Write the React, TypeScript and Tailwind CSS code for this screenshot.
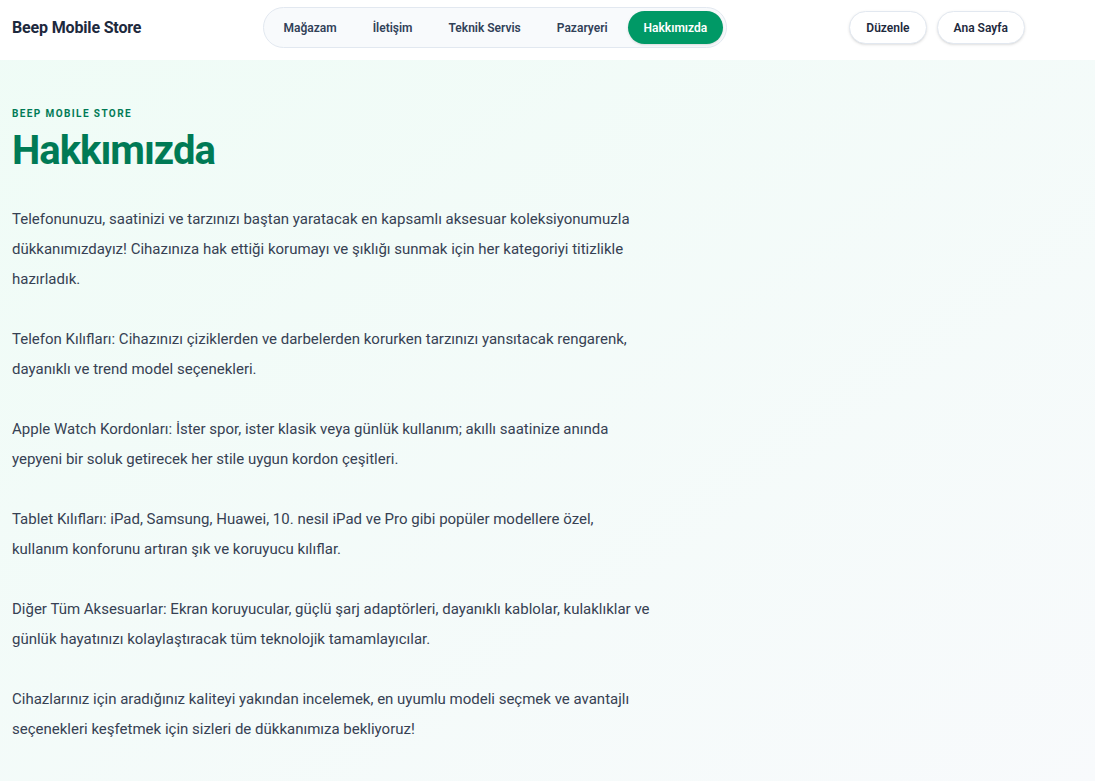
import React from "react";

const navItems = ["Mağazam", "İletişim", "Teknik Servis", "Pazaryeri", "Hakkımızda"];

const paragraphs = [
  "Telefonunuzu, saatinizi ve tarzınızı baştan yaratacak en kapsamlı aksesuar koleksiyonumuzla dükkanımızdayız! Cihazınıza hak ettiği korumayı ve şıklığı sunmak için her kategoriyi titizlikle hazırladık.",
  "Telefon Kılıfları: Cihazınızı çiziklerden ve darbelerden korurken tarzınızı yansıtacak rengarenk, dayanıklı ve trend model seçenekleri.",
  "Apple Watch Kordonları: İster spor, ister klasik veya günlük kullanım; akıllı saatinize anında yepyeni bir soluk getirecek her stile uygun kordon çeşitleri.",
  "Tablet Kılıfları: iPad, Samsung, Huawei, 10. nesil iPad ve Pro gibi popüler modellere özel, kullanım konforunu artıran şık ve koruyucu kılıflar.",
  "Diğer Tüm Aksesuarlar: Ekran koruyucular, güçlü şarj adaptörleri, dayanıklı kablolar, kulaklıklar ve günlük hayatınızı kolaylaştıracak tüm teknolojik tamamlayıcılar.",
  "Cihazlarınız için aradığınız kaliteyi yakından incelemek, en uyumlu modeli seçmek ve avantajlı seçenekleri keşfetmek için sizleri de dükkanımıza bekliyoruz!",
];

function Header() {
  return (
    <header className="h-[60px] bg-white flex items-center justify-between pl-3 pr-[70px] pb-[5px]">
      <div className="text-[16px] font-bold tracking-[-0.01em] text-slate-800">
        Beep Mobile Store
      </div>

      <nav className="flex items-center gap-1 rounded-full border border-slate-200 bg-slate-50 p-[3px]">
        {navItems.map((item) => {
          const active = item === "Hakkımızda";
          return (
            <button
              key={item}
              className={
                active
                  ? "h-[33px] rounded-full bg-emerald-600 px-4 text-[12px] font-semibold text-white shadow-sm"
                  : "h-[33px] rounded-full px-4 text-[12px] font-semibold text-slate-700"
              }
            >
              {item}
            </button>
          );
        })}
      </nav>

      <div className="flex items-center gap-[10px]">
        <button className="h-[33px] rounded-full border border-slate-200 bg-white px-4 text-[12px] font-semibold text-slate-800 shadow-sm">
          Düzenle
        </button>
        <button className="h-[33px] rounded-full border border-slate-200 bg-white px-4 text-[12px] font-semibold text-slate-800 shadow-sm">
          Ana Sayfa
        </button>
      </div>
    </header>
  );
}

export default function App() {
  return (
    <div
      className="min-h-screen bg-gradient-to-br from-[#effcf6] to-[#f8fafc]"
      style={{ fontFamily: "Roboto, 'Noto Sans', sans-serif" }}
    >
      <Header />

      <main className="px-3 pt-[47px] pb-12">
        <p className="text-[10px] font-bold uppercase leading-[14px] tracking-[0.14em] text-emerald-700">
          Beep Mobile Store
        </p>
        <h1 className="mt-[5px] text-[40px] font-bold leading-[50px] tracking-tight text-emerald-700">
          Hakkımızda
        </h1>

        <div className="mt-7 flex max-w-[640px] flex-col gap-[30px] text-[15px] leading-[30px] text-gray-700">
          {paragraphs.map((p, i) => (
            <p key={i}>{p}</p>
          ))}
        </div>
      </main>
    </div>
  );
}
